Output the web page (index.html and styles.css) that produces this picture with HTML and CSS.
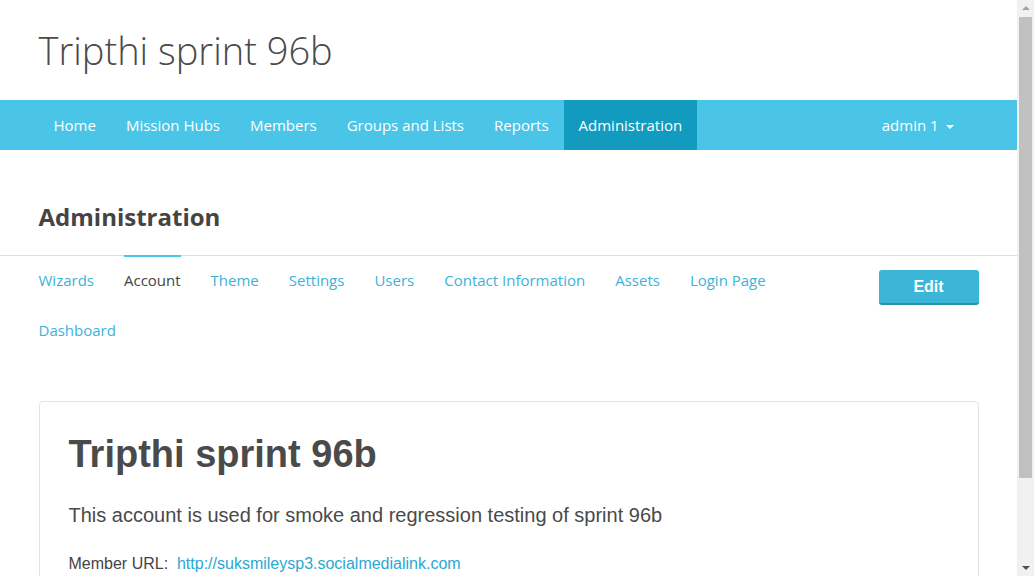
FILE: index.html
```html
<!DOCTYPE html>
<html>
<head>
<meta charset="utf-8">
<link rel="stylesheet" href="styles.css">
</head>
<body>
<div class="page">
  <header class="site-header">
    <div class="container">
      <div class="site-title">Tripthi sprint 96b</div>
    </div>
  </header>
  <nav class="navbar">
    <div class="container navbar-inner">
      <ul class="nav-main">
        <li><a href="#">Home</a></li>
        <li><a href="#">Mission Hubs</a></li>
        <li><a href="#">Members</a></li>
        <li><a href="#">Groups and Lists</a></li>
        <li><a href="#">Reports</a></li>
        <li class="active"><a href="#">Administration</a></li>
      </ul>
      <div class="nav-user"><a href="#">admin 1 <span class="caret"></span></a></div>
    </div>
  </nav>
  <div class="container">
    <h2 class="section-title">Administration</h2>
  </div>
  <div class="tabs-bar">
    <div class="container tabs-inner">
      <ul class="tabs">
        <li><a href="#">Wizards</a></li>
        <li class="active"><a href="#">Account</a></li>
        <li><a href="#">Theme</a></li>
        <li><a href="#">Settings</a></li>
        <li><a href="#">Users</a></li>
        <li><a href="#">Contact Information</a></li>
        <li><a href="#">Assets</a></li>
        <li><a href="#">Login Page</a></li>
        <li><a href="#">Dashboard</a></li>
      </ul>
      <div class="tab-actions"><button class="btn-edit">Edit</button></div>
    </div>
  </div>
  <div class="container">
    <div class="card">
      <h1 class="card-title">Tripthi sprint 96b</h1>
      <p class="card-desc">This account is used for smoke and regression testing of sprint 96b</p>
      <p class="card-url">Member URL:&nbsp; <a href="#">http://suksmileysp3.socialmedialink.com</a></p>
    </div>
  </div>
</div>
<div class="scrollbar">
  <div class="sb-up"></div>
  <div class="sb-thumb"></div>
  <div class="sb-down"></div>
</div>
</body>
</html>
```
FILE: styles.css
```css
* { box-sizing: border-box; }
html, body { margin: 0; padding: 0; height: 100%; overflow: hidden; background: #fff; }
body { font-family: "Open Sans", "Liberation Sans", sans-serif; color: #555; }
a { text-decoration: none; }
ul { list-style: none; margin: 0; padding: 0; }

.page { width: 1017px; }
.container { width: 940px; margin: 0 auto; }

.site-header { height: 100px; }
.site-title {
  font-weight: 300;
  font-size: 38px;
  color: #4a4a4a;
  line-height: 100px;
}

.navbar { background: #4ac5e7; height: 50px; }
.navbar-inner { display: flex; height: 50px; }
.nav-main { display: flex; }
.nav-main li a {
  display: block;
  padding: 0 15px;
  line-height: 50px;
  font-size: 15px;
  color: #fff;
}
.nav-main li.active a { background: #129bbf; }
.nav-user { margin-left: auto; margin-right: 10px; }
.nav-user a {
  display: block;
  padding: 0 15px;
  line-height: 50px;
  font-size: 15px;
  color: #fff;
}
.caret {
  display: inline-block;
  width: 0; height: 0;
  margin-left: 3px;
  vertical-align: middle;
  border-top: 4px solid #fff;
  border-left: 4px solid transparent;
  border-right: 4px solid transparent;
}

.section-title {
  margin: 0;
  height: 105px;
  line-height: 133px;
  font-size: 24px;
  font-weight: 700;
  color: #444;
}

.tabs-bar { border-top: 1px solid #ddd; }
.tabs-inner { display: flex; align-items: flex-start; }
.tabs { display: flex; flex-wrap: wrap; flex: 1; }
.tabs li { margin-right: 30px; }
.tabs li a {
  display: block;
  line-height: 48px;
  padding-bottom: 2px;
  font-size: 15px;
  color: #3db2da;
}
.tabs li.active a {
  color: #444;
  border-top: 2px solid #4ac5e7;
  margin-top: -1px;
  line-height: 47px;
}
.tab-actions { padding-top: 14px; }
.btn-edit {
  width: 100px;
  height: 35px;
  border: 0;
  border-bottom: 2px solid #2a8fab;
  border-radius: 3px;
  background: #3bb6d9;
  color: #fff;
  font-family: "Liberation Sans", Arial, sans-serif;
  font-weight: 700;
  font-size: 16px;
  padding: 0;
}

.card {
  margin-top: 45px;
  border: 1px solid #e4e4e4;
  border-radius: 4px;
  padding: 26px 29px 30px;
  height: 300px;
  font-family: "Liberation Sans", Arial, sans-serif;
}
.card-title {
  margin: 0;
  font-size: 38px;
  font-weight: 700;
  color: #4a4a4a;
  line-height: 52px;
}
.card-desc {
  margin: 20px 0 0;
  font-size: 20px;
  color: #4a4a4a;
  line-height: 30px;
}
.card-url {
  margin: 24px 0 0;
  font-size: 16px;
  color: #444;
  line-height: 20px;
}
.card-url a { color: #2ba7d3; }

.scrollbar {
  position: fixed;
  top: 0; right: 0;
  width: 17px; height: 576px;
  background: #f1f1f1;
}
.sb-up {
  position: absolute; top: 6px; left: 5px;
  width: 0; height: 0;
  border-bottom: 4px solid #a3a3a3;
  border-left: 4px solid transparent;
  border-right: 4px solid transparent;
}
.sb-thumb {
  position: absolute; top: 17px; left: 2px;
  width: 13px; height: 461px;
  background: #c1c1c1;
}
.sb-down {
  position: absolute; bottom: 6px; left: 5px;
  width: 0; height: 0;
  border-top: 4px solid #505050;
  border-left: 4px solid transparent;
  border-right: 4px solid transparent;
}
```
